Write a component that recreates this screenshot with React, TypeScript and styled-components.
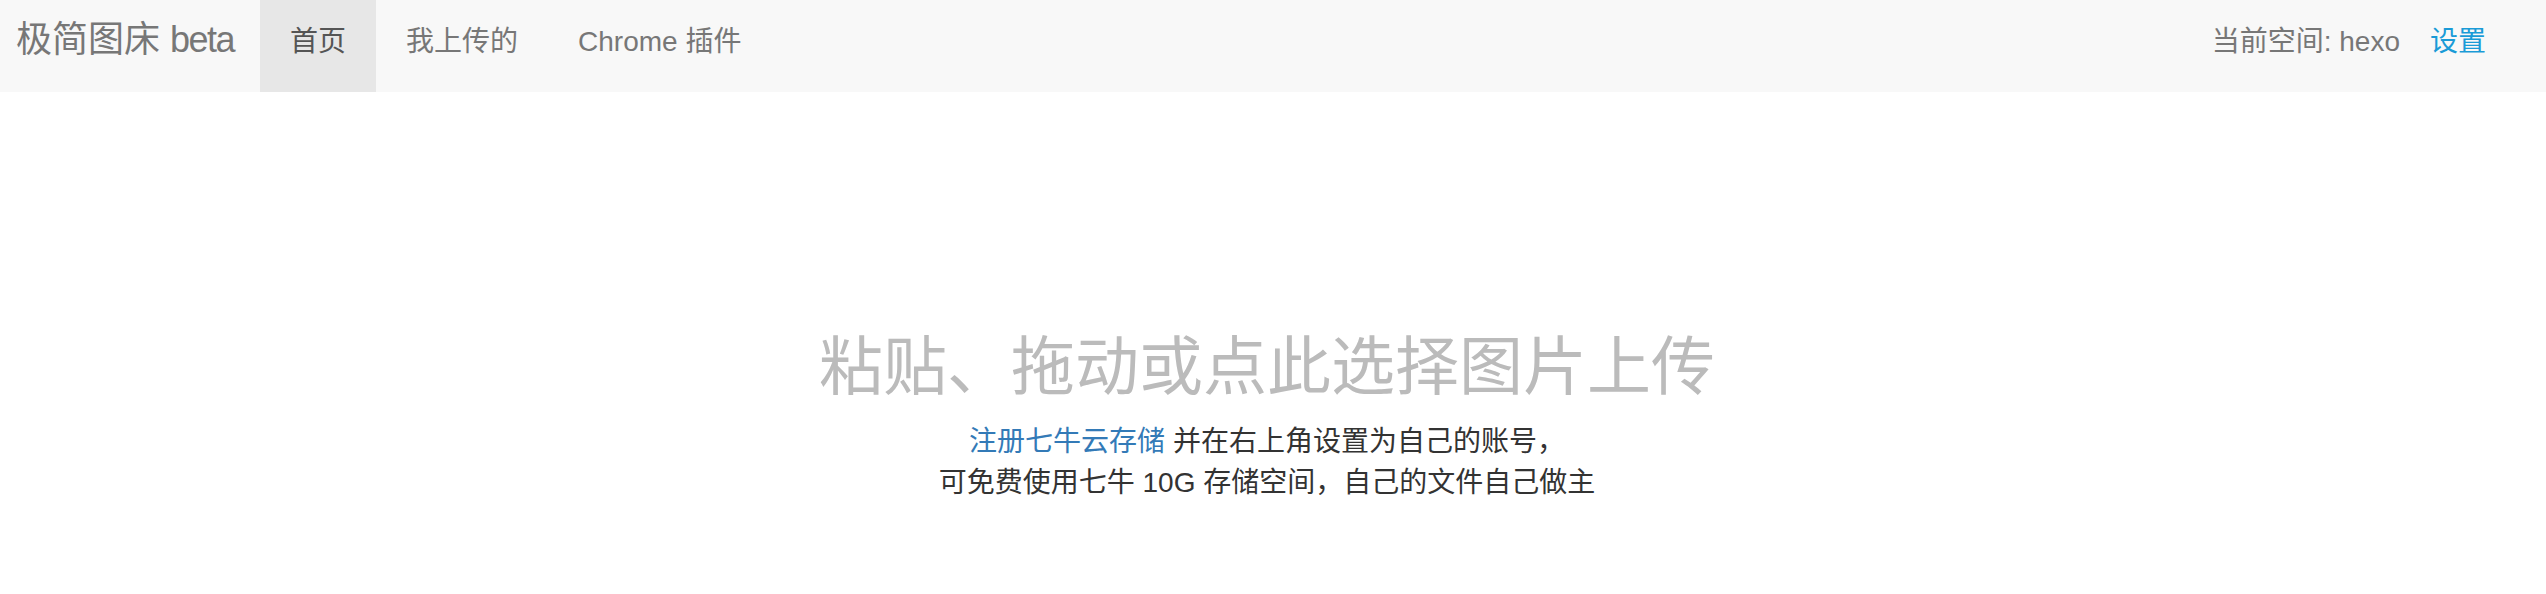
import React from "react";
import styled, { createGlobalStyle } from "styled-components";

const GlobalStyle = createGlobalStyle`
  html, body {
    margin: 0;
    padding: 0;
    background: #ffffff;
  }
  body {
    font-family: "Liberation Sans", "Noto Sans CJK SC", sans-serif;
    color: #333333;
  }
  * { box-sizing: border-box; }
`;

const Navbar = styled.nav`
  display: flex;
  align-items: stretch;
  justify-content: space-between;
  height: 92px;
  background: #f8f8f8;
`;

const LeftGroup = styled.div`
  display: flex;
  align-items: stretch;
`;

const Brand = styled.a`
  display: block;
  width: 260px;
  padding: 20px 0 0 16px;
  font-size: 36px;
  line-height: 40px;
  color: #777777;
  text-decoration: none;
  white-space: nowrap;
`;

const BrandTag = styled.span`
  letter-spacing: -1.5px;
`;

const NavList = styled.ul`
  display: flex;
  align-items: stretch;
  margin: 0;
  padding: 0;
  list-style: none;
`;

const NavItem = styled.li<{ $active?: boolean }>`
  display: flex;
  align-items: stretch;
  background: ${(p) => (p.$active ? "#e7e7e7" : "transparent")};
`;

const NavLink = styled.a<{ $active?: boolean }>`
  display: block;
  padding: 22px 30px 0;
  font-size: 28px;
  line-height: 40px;
  color: ${(p) => (p.$active ? "#555555" : "#777777")};
  text-decoration: none;
  white-space: nowrap;
`;

const RightGroup = styled.div`
  display: flex;
  align-items: stretch;
  padding-right: 30px;
`;

const NavText = styled.span`
  display: block;
  padding-top: 22px;
  font-size: 28px;
  line-height: 40px;
  color: #777777;
  white-space: nowrap;
`;

const SettingsLink = styled.a`
  display: block;
  padding: 22px 30px 0;
  font-size: 28px;
  line-height: 40px;
  color: #1a9bd7;
  text-decoration: none;
`;

const DropZone = styled.main`
  padding: 240px 12px 0 0;
  text-align: center;
`;

const Title = styled.h1`
  margin: 0 0 19px;
  font-size: 64px;
  line-height: 70px;
  font-weight: 400;
  color: #bbbbbb;
`;

const Hint = styled.p`
  margin: 0;
  font-size: 28px;
  line-height: 41px;
  color: #333333;
`;

const HintLink = styled.a`
  color: #337ab7;
  text-decoration: none;
`;

export default function App() {
  return (
    <>
      <GlobalStyle />
      <Navbar>
        <LeftGroup>
          <Brand href="#">
            极简图床 <BrandTag>beta</BrandTag>
          </Brand>
          <NavList>
            <NavItem $active>
              <NavLink href="#" $active>
                首页
              </NavLink>
            </NavItem>
            <NavItem>
              <NavLink href="#">我上传的</NavLink>
            </NavItem>
            <NavItem>
              <NavLink href="#">Chrome 插件</NavLink>
            </NavItem>
          </NavList>
        </LeftGroup>
        <RightGroup>
          <NavText>当前空间: hexo</NavText>
          <SettingsLink href="#">设置</SettingsLink>
        </RightGroup>
      </Navbar>
      <DropZone>
        <Title>粘贴、拖动或点此选择图片上传</Title>
        <Hint>
          <HintLink href="#">注册七牛云存储</HintLink> 并在右上角设置为自己的账号，
          <br />
          可免费使用七牛 10G 存储空间，自己的文件自己做主
        </Hint>
      </DropZone>
    </>
  );
}
